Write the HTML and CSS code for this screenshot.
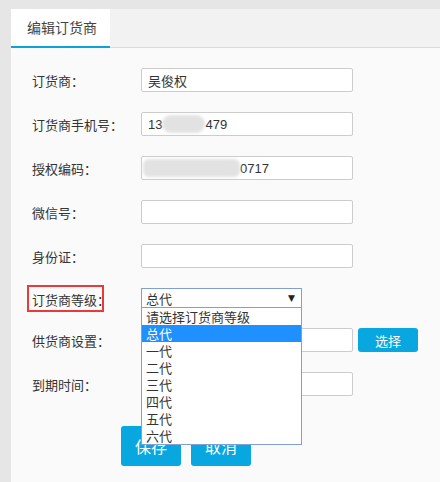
FILE: index.html
```html
<!DOCTYPE html>
<html lang="zh">
<head>
<meta charset="utf-8">
<link rel="stylesheet" href="styles.css">
</head>
<body>
<div class="panel">
  <div class="tabbar">
    <div class="tab">编辑订货商</div>
  </div>
  <div class="body">
    <div class="form">
      <div class="row">
        <div class="label">订货商：</div>
        <div class="input"><span class="cjk">吴俊权</span></div>
      </div>
      <div class="row">
        <div class="label">订货商手机号：</div>
        <div class="input"><span>13</span><span class="blob b1"></span><span>479</span></div>
      </div>
      <div class="row">
        <div class="label">授权编码：</div>
        <div class="input nopad"><span class="blob b2"></span><span>0717</span></div>
      </div>
      <div class="row">
        <div class="label">微信号：</div>
        <div class="input"></div>
      </div>
      <div class="row">
        <div class="label">身份证：</div>
        <div class="input"></div>
      </div>
      <div class="row row-select">
        <div class="label"><span class="marked">订货商等级：</span></div>
        <div class="select-wrap">
          <div class="select"><span>总代</span><span class="arrow">▼</span></div>
          <ul class="dropdown">
            <li>请选择订货商等级</li>
            <li class="active">总代</li>
            <li>一代</li>
            <li>二代</li>
            <li>三代</li>
            <li>四代</li>
            <li>五代</li>
            <li>六代</li>
          </ul>
        </div>
      </div>
      <div class="row">
        <div class="label">供货商设置：</div>
        <div class="input"></div>
        <button class="btn btn-small">选择</button>
      </div>
      <div class="row">
        <div class="label">到期时间：</div>
        <div class="input"></div>
      </div>
      <div class="actions">
        <button class="btn btn-big">保存</button>
        <button class="btn btn-big">取消</button>
      </div>
    </div>
  </div>
</div>
</body>
</html>
```
FILE: styles.css
```css
html, body {
  margin: 0;
  padding: 0;
}
body {
  background: #e6e6e6;
  font-family: "Liberation Sans", "Noto Sans CJK SC", sans-serif;
  color: #333;
  width: 440px;
  height: 482px;
  overflow: hidden;
}
.panel {
  margin: 9px 0 0 11px;
  background: #fafafa;
  height: 473px;
}
.tabbar {
  display: flex;
  height: 38px;
  background: #f2f2f2;
  border-bottom: 1px solid #dcdcdc;
}
.tab {
  box-sizing: border-box;
  width: 99px;
  height: 39px;
  margin-bottom: -1px;
  padding-left: 16px;
  background: #fff;
  border-bottom: 2px solid #0aa4d9;
  font-family: "Noto Sans CJK SC", sans-serif;
  font-size: 14px;
  line-height: 37px;
  color: #444;
}
.body {
  padding: 20px 0 0 21px;
}
.form {
  display: flex;
  flex-direction: column;
  gap: 20px;
}
.row {
  display: flex;
  align-items: center;
}
.label {
  width: 109px;
  font-family: "Noto Sans CJK SC", sans-serif;
  font-size: 13px;
  color: #333;
  white-space: nowrap;
}
.marked {
  display: inline-block;
  margin-left: -5px;
  padding: 4px 3px 4px 3px;
  border: 2px solid #e83a3a;
  width: 77px;
  box-sizing: border-box;
  height: 27px;
  line-height: 17px;
}
.row-select {
  height: 20px;
}
.input {
  box-sizing: border-box;
  width: 212px;
  height: 24px;
  border: 1px solid #ccc;
  border-radius: 2px;
  background: #fff;
  padding-left: 6px;
  display: flex;
  align-items: center;
  font-size: 13px;
  color: #333;
}
.input.nopad {
  padding-left: 1px;
}
.cjk {
  font-family: "Noto Sans CJK SC", sans-serif;
}
.blob {
  display: inline-block;
  height: 18px;
  background: #e2e2e2;
  filter: blur(1.5px);
  border-radius: 9px;
}
.b1 { width: 43px; }
.b2 { width: 97px; border-radius: 6px; }
.select-wrap {
  position: relative;
  width: 161px;
  height: 20px;
}
.select {
  box-sizing: border-box;
  width: 161px;
  height: 20px;
  border: 1px solid #7f9fd6;
  background: #fff;
  display: flex;
  align-items: center;
  justify-content: space-between;
  padding: 0 6px 0 4px;
  font-family: "Noto Sans CJK SC", sans-serif;
  font-size: 13px;
  color: #333;
}
.arrow {
  font-family: "DejaVu Sans", sans-serif;
  font-size: 9px;
  color: #222;
}
.dropdown {
  position: absolute;
  left: 0;
  top: 19px;
  z-index: 5;
  box-sizing: border-box;
  width: 161px;
  margin: 0;
  padding: 0;
  list-style: none;
  background: #fff;
  border: 1px solid #7f9fd6;
}
.dropdown li {
  height: 17px;
  line-height: 17px;
  padding-left: 4px;
  font-family: "Noto Sans CJK SC", sans-serif;
  font-size: 13px;
  color: #333;
}
.dropdown li.active {
  background: #1e90ff;
  color: #fff;
}
.btn {
  border: none;
  background: #08a7df;
  color: #fff;
  font-family: "Noto Sans CJK SC", sans-serif;
  border-radius: 3px;
  padding: 0;
  cursor: pointer;
}
.btn-small {
  margin-left: 5px;
  width: 60px;
  height: 24px;
  font-size: 13px;
}
.actions {
  display: flex;
  gap: 10px;
  padding-left: 89px;
  margin-top: 10px;
}
.btn-big {
  width: 60px;
  height: 40px;
  font-size: 16px;
}
```
